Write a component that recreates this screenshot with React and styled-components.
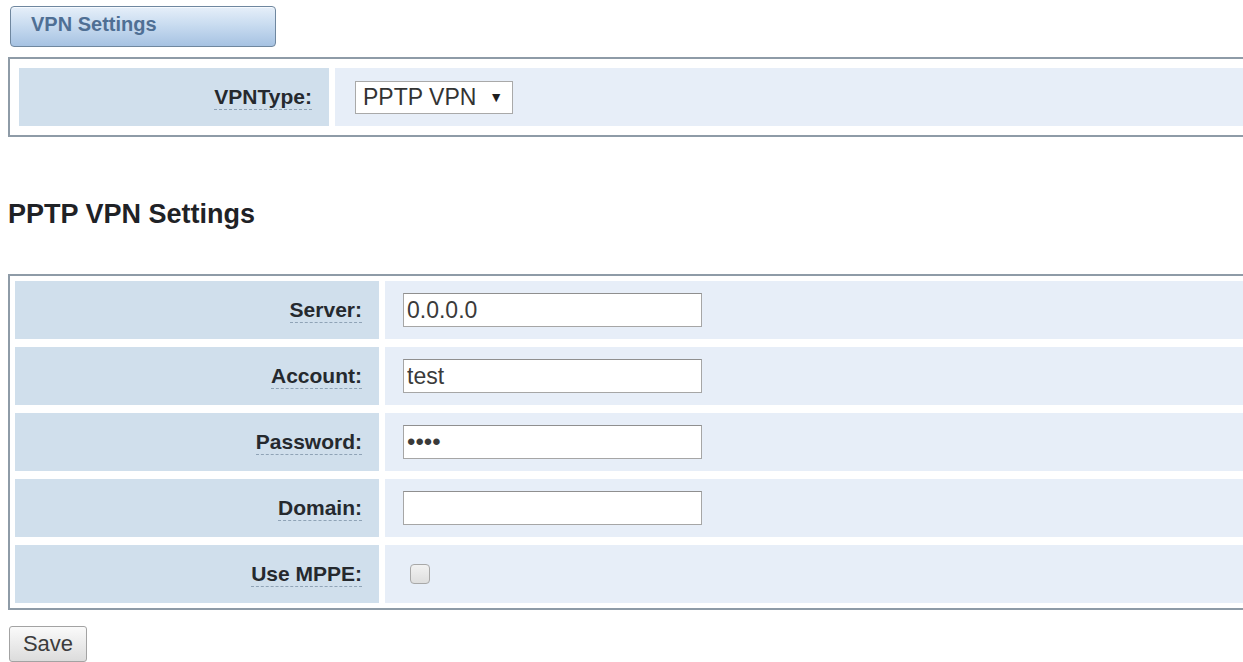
import React, { useState } from "react";
import styled, { createGlobalStyle } from "styled-components";

const GlobalStyle = createGlobalStyle`
    body {
        margin: 0;
        background: #fff;
        font-family: "Liberation Sans", Arial, sans-serif;
        overflow: hidden;
    }
`;

const fields = [
    { name: "server", label: "Server:", type: "text", value: "0.0.0.0" },
    { name: "account", label: "Account:", type: "text", value: "test" },
    { name: "password", label: "Password:", type: "password", value: "test" },
    { name: "domain", label: "Domain:", type: "text", value: "" },
];

const App = () => {
    const [values, setValues] = useState(
        Object.fromEntries(fields.map((f) => [f.name, f.value]))
    );
    const [mppe, setMppe] = useState(false);

    const onChange = (e) =>
        setValues({ ...values, [e.target.name]: e.target.value });

    return (
        <Page>
            <GlobalStyle />
            <TabButton>VPN Settings</TabButton>

            <FormTable $labelWidth={310} $pad={9}>
                <LabelCell>
                    <Label>VPNType:</Label>
                </LabelCell>
                <ValueCell $indent={20}>
                    <SelectBox>
                        PPTP VPN
                        <Arrow>▼</Arrow>
                    </SelectBox>
                </ValueCell>
            </FormTable>

            <Heading>PPTP VPN Settings</Heading>

            <FormTable $labelWidth={364} $pad={5}>
                {fields.map((f) => (
                    <React.Fragment key={f.name}>
                        <LabelCell>
                            <Label>{f.label}</Label>
                        </LabelCell>
                        <ValueCell>
                            <TextInput
                                type={f.type}
                                name={f.name}
                                value={values[f.name]}
                                onChange={onChange}
                            />
                        </ValueCell>
                    </React.Fragment>
                ))}
                <LabelCell>
                    <Label>Use MPPE:</Label>
                </LabelCell>
                <ValueCell $indent={25}>
                    <Check
                        type="checkbox"
                        checked={mppe}
                        onChange={(e) => setMppe(e.target.checked)}
                    />
                </ValueCell>
            </FormTable>

            <SaveButton>Save</SaveButton>
        </Page>
    );
};

const Page = styled.div`
    padding: 6px 0 0 8px;
`;

const TabButton = styled.div`
    box-sizing: border-box;
    width: 266px;
    height: 41px;
    margin-left: 2px;
    padding: 0 0 4px 20px;
    display: flex;
    align-items: center;
    border: 1px solid #6f879f;
    border-radius: 4px;
    background: linear-gradient(#e6eff9 0%, #c9dcf0 45%, #a6c2e2 100%);
    box-shadow: inset 0 1px 0 #f6faff;
    color: #4f6f94;
    font-size: 20px;
    font-weight: bold;
`;

/* the panel runs on past the right edge of the window */
const FormTable = styled.div`
    box-sizing: border-box;
    width: 1252px;
    margin-top: 10px;
    display: grid;
    grid-template-columns: ${(p) => p.$labelWidth}px 1fr;
    grid-auto-rows: 58px;
    gap: 8px 6px;
    padding: ${(p) => p.$pad}px;
    border: 2px solid #8e9ba7;
`;

const LabelCell = styled.div`
    display: flex;
    align-items: center;
    justify-content: flex-end;
    padding-right: 17px;
    background: #d0dfec;
`;

const Label = styled.span`
    color: #25292e;
    font-size: 21px;
    font-weight: bold;
    line-height: 24px;
    border-bottom: 1px dashed #8fa3b6;
`;

const ValueCell = styled.div`
    display: flex;
    align-items: center;
    padding-left: ${(p) => p.$indent ?? 18}px;
    background: #e7eef8;
`;

const SelectBox = styled.div`
    box-sizing: border-box;
    width: 158px;
    height: 33px;
    padding: 0 9px 0 7px;
    display: flex;
    align-items: center;
    justify-content: space-between;
    background: #fff;
    border: 1px solid #a9a9a9;
    color: #333;
    font-size: 23px;
`;

const Arrow = styled.span`
    font-size: 14px;
    color: #1e1e1e;
`;

const TextInput = styled.input`
    box-sizing: border-box;
    width: 299px;
    height: 34px;
    padding: 0 3px;
    border: 1px solid #a6a6a6;
    border-top-color: #8f8f8f;
    background: #fff;
    color: #3a3a3a;
    font-family: "Liberation Sans", Arial, sans-serif;
    font-size: 23px;
    outline: none;

    &[type="password"] {
        font-size: 24px;
        letter-spacing: 0;
    }
`;

const Check = styled.input`
    appearance: none;
    width: 20px;
    height: 20px;
    margin: 0;
    border: 1px solid #a8a8a8;
    border-radius: 4px;
    background: linear-gradient(#f2f2f2, #dedede);
`;

const Heading = styled.h2`
    margin: 62px 0 44px;
    color: #1f2226;
    font-size: 27px;
    font-weight: bold;
`;

const SaveButton = styled.button`
    box-sizing: border-box;
    width: 78px;
    height: 36px;
    margin: 16px 0 0 1px;
    padding: 0;
    border: 1px solid #a3a3a3;
    border-radius: 3px;
    background: linear-gradient(#fafafa, #dcdcdc);
    color: #3c3c3c;
    font-family: "Liberation Sans", Arial, sans-serif;
    font-size: 22px;
`;

export default App;
